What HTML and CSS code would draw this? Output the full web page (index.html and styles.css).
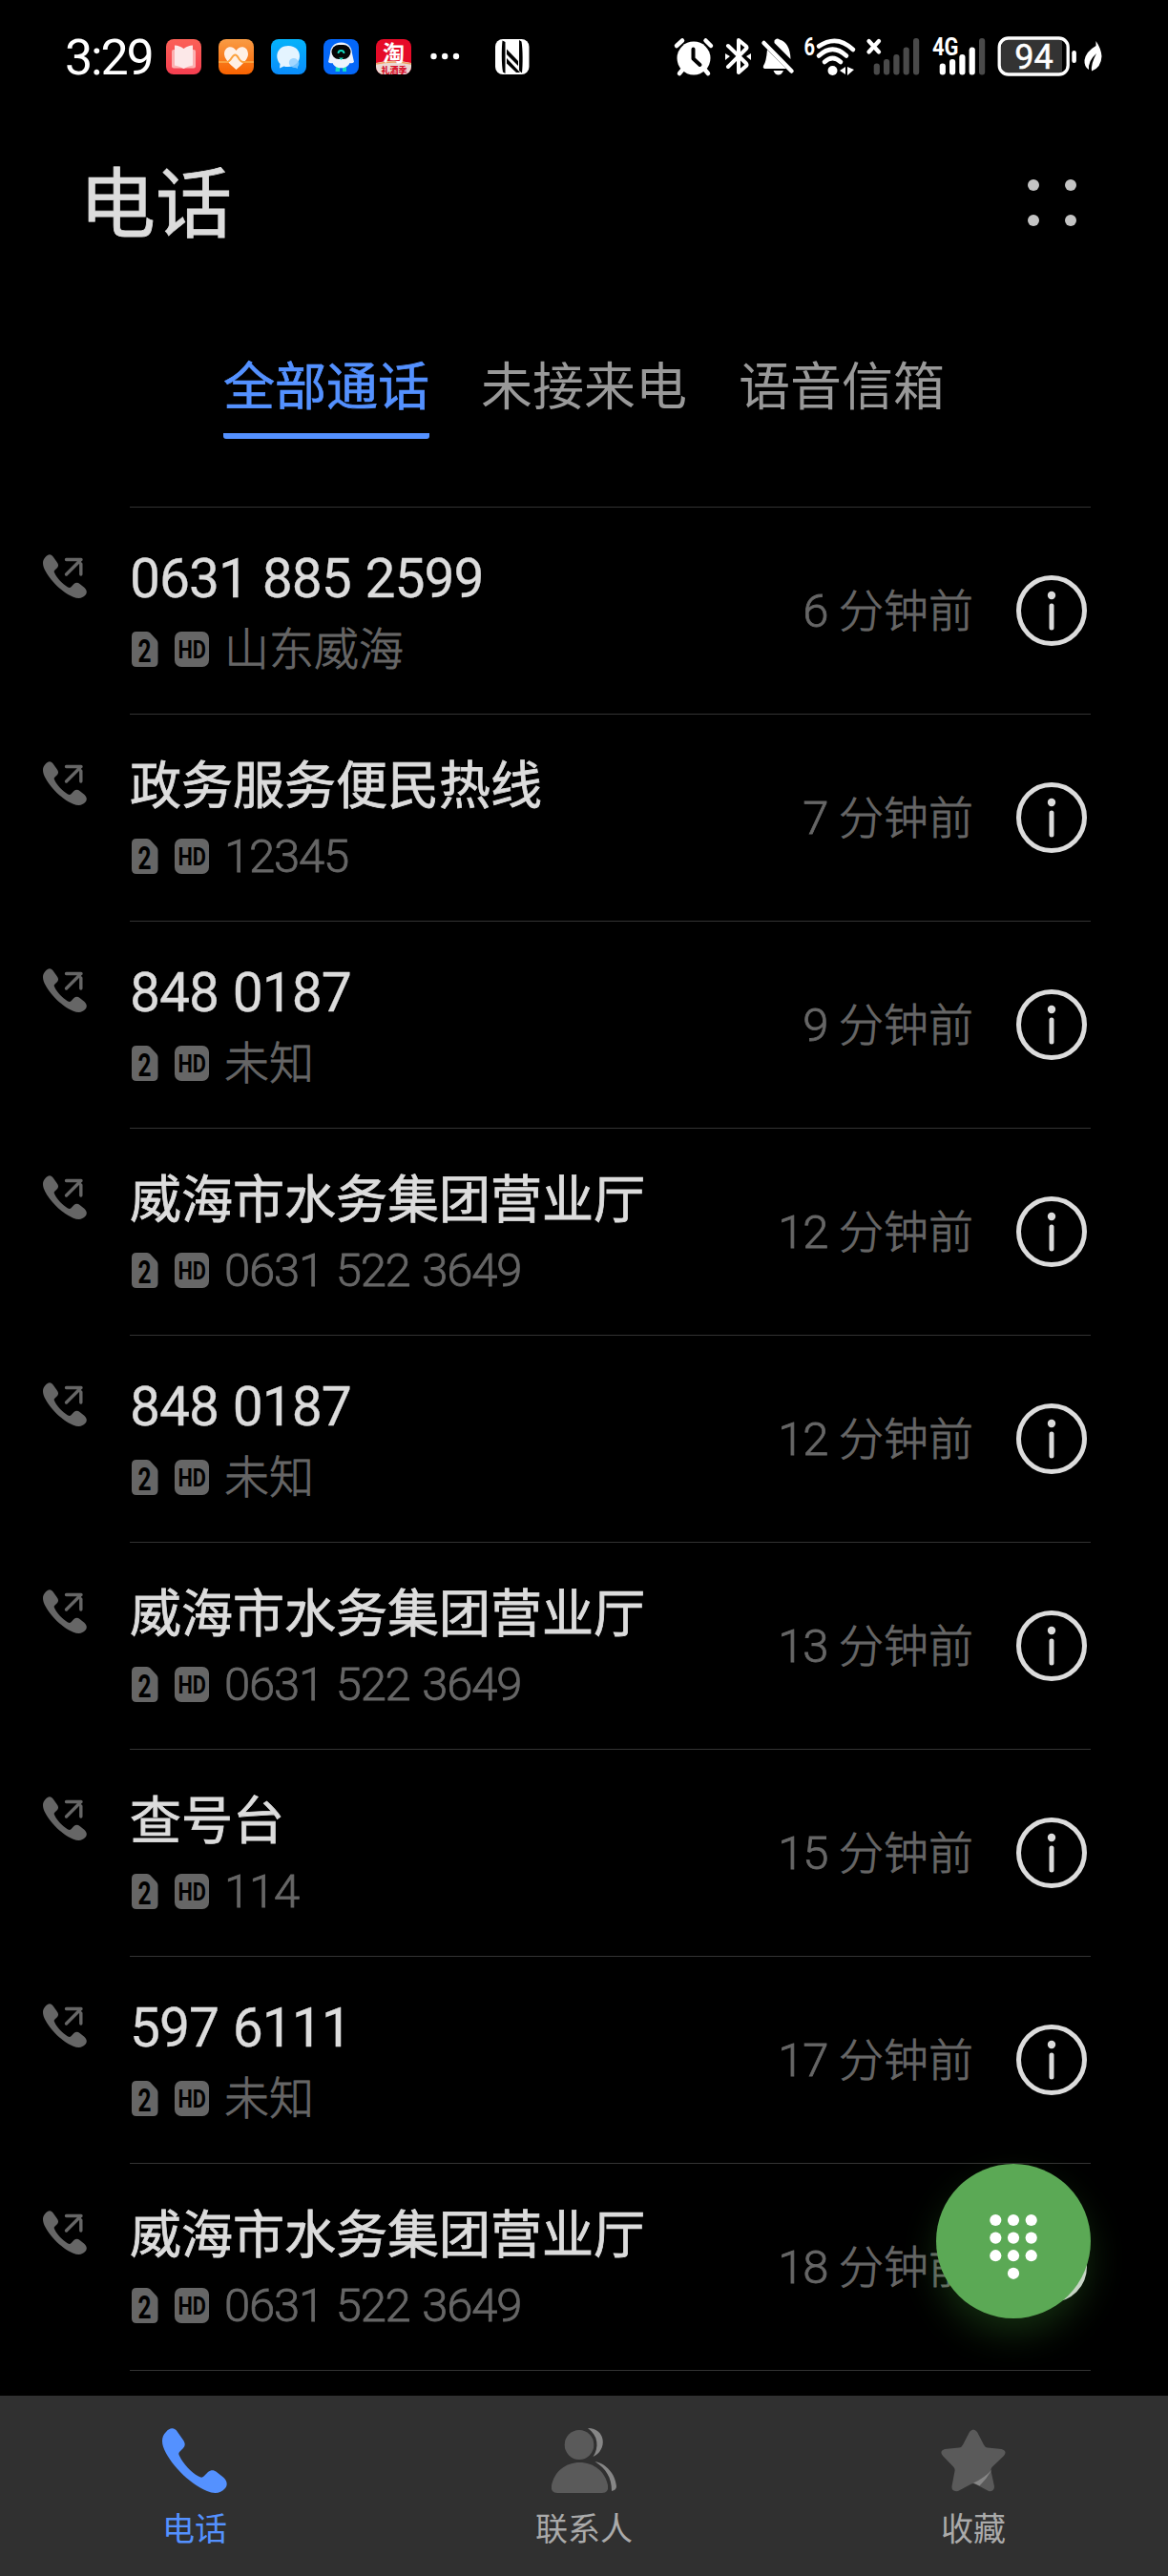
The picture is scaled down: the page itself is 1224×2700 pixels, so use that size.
FILE: index.html
```html
<!DOCTYPE html>
<html lang="zh-CN">
<head>
    <meta charset="UTF-8">
    <meta name="viewport" content="width=device-width, initial-scale=1.0">
    <title>电话</title>
    <link rel="stylesheet" href="styles.css">
</head>
<body>
    <!-- shared icons -->
    <svg class="sprite" width="0" height="0">
        <symbol id="phone" viewBox="0 0 68 68">
            <path d="M4 4C8 -1 13 -1 16 4L22 12.500C24.500 16 24 19 22 21L18.500 24.500C17 26 17 27 18 29C22 37.500 30 46 38 50.500C40.500 52 42 52 43.500 50.500L48 46C51 43.500 54 43.500 57 46L64 51.500C68.500 55.500 68.500 60 66 63C61 69 54 69 47 66C27 57.500 7 36 1 19.500C-1 13 0 8 4 4Z"/>
        </symbol>
        <symbol id="outgoing" viewBox="0 0 46 47">
            <use href="#phone" width="46" height="46"/>
            <path d="M24.500 5.500H40M39.800 10V21M24.500 21L39 6.500" fill="none" stroke="#666" stroke-width="3.400" stroke-linecap="round"/>
        </symbol>
        <symbol id="info" viewBox="0 0 74 74">
            <circle cx="37" cy="37" r="34.500" fill="none" stroke="#dcdcdc" stroke-width="5"/>
            <circle cx="37" cy="21" r="4.200" fill="#dcdcdc"/>
            <path d="M37 32V55" stroke="#dcdcdc" stroke-width="5" stroke-linecap="round"/>
        </symbol>
        <symbol id="sim" viewBox="0 0 28 37">
            <path d="M5 0H16Q18 0 19.500 1.500L26 8.500Q27.500 10 27.500 12V32Q27.500 37 22.500 37H5Q0 37 0 32V5Q0 0 5 0Z" fill="#666"/>
            <text x="13.500" y="31.500" text-anchor="middle" class="sim-text" textLength="14" lengthAdjust="spacingAndGlyphs">2</text>
        </symbol>
        <symbol id="hd" viewBox="0 0 36 37">
            <rect width="36" height="37" rx="7" fill="#666"/>
            <text x="18.200" y="27.500" text-anchor="middle" class="hd-text" textLength="29.500" lengthAdjust="spacingAndGlyphs">HD</text>
        </symbol>
    </svg>

    <div class="status-bar">
        <div class="status-left">
            <span class="clock">3:29</span>
            <svg class="app" viewBox="0 0 37 37">
                <defs><linearGradient id="g1" x2="0" y2="1"><stop stop-color="#fb6157"/><stop offset="1" stop-color="#f53e50"/></linearGradient></defs>
                <rect width="37" height="37" rx="8" fill="url(#g1)"/>
                <rect x="6" y="11" width="25" height="19.500" rx="2" fill="#fbb0b0"/>
                <path d="M9 6.500Q14 6.500 18.500 10Q23 6.500 28 6.500V27.500Q23 28 18.500 31Q14 28 9 27.500Z" fill="#fce8e8"/>
            </svg>
            <svg class="app" viewBox="0 0 37 37">
                <defs><linearGradient id="g2" x2="0" y2="1"><stop stop-color="#f99c45"/><stop offset="1" stop-color="#f86200"/></linearGradient></defs>
                <rect width="37" height="37" rx="8" fill="url(#g2)"/>
                <path d="M18.500 32Q6 22 6 16C6 7 15 6 18.500 12C22 6 31 7 31 16Q31 22 18.500 32Z" fill="#fff0e6"/>
                <path d="M0 24H9C13 24 14 16.500 17.500 16.500S21 24 26 24H37" fill="none" stroke="#fba23f" stroke-width="2"/>
            </svg>
            <svg class="app" viewBox="0 0 37 37">
                <defs><linearGradient id="g3" x2="0" y2="1"><stop stop-color="#04b3fa"/><stop offset="1" stop-color="#0a8cfb"/></linearGradient></defs>
                <rect width="37" height="37" rx="8" fill="url(#g3)"/>
                <path d="M18 7C26 7 30 12 30 18S25 29 18 29Q15 29 13.500 28.500L9 30.500L9.500 26C3 18 7 7 18 7Z" fill="#e4f4ff"/>
                <path d="M24 20A5.500 5.500 0 0 1 28 29L28 31L25.500 30C17 30 17 20 24 20Z" fill="#8fd0ff" opacity=".8"/>
            </svg>
            <svg class="app" viewBox="0 0 37 37">
                <rect width="37" height="37" rx="8" fill="#0467f8"/>
                <path d="M13 28H17V34H12.500M20 28H24V34H20" fill="#14dcc0"/>
                <path d="M18.500 3.500C26 3.500 30 9 30 15L32 24Q30 26 27.500 25C25 32 12 32 9.500 25Q7 26 5 24L7 15C7 9 11 3.500 18.500 3.500Z" fill="#eef3fc"/>
                <rect x="8.500" y="6" width="20" height="15" rx="7.500" fill="#050505"/>
                <path d="M15.500 15A3 3 0 0 1 21.500 15" fill="none" stroke="#14dcc0" stroke-width="1.800"/>
                <path d="M16 19.500H21L18.500 22Z" fill="#14dcc0"/>
            </svg>
            <svg class="app" viewBox="0 0 37 37">
                <defs><clipPath id="round"><rect width="37" height="37" rx="8"/></clipPath></defs>
                <g clip-path="url(#round)">
                    <rect width="37" height="37" fill="#e60b28"/>
                    <path d="M0 25Q18 20 37 25V37H0Z" fill="#ead9d4"/>
                    <path d="M0 26Q18 22 37 26" fill="none" stroke="#f0a060" stroke-width="1.500"/>
                    <text x="18.500" y="22.500" text-anchor="middle" class="tao">淘</text>
                    <text x="19" y="35.500" text-anchor="middle" class="tao-sub">礼酒季</text>
                </g>
            </svg>
            <svg class="more-dots" width="30" height="8" viewBox="0 0 30 8">
                <g fill="#fff"><circle cx="3.500" cy="4" r="3.200"/><circle cx="15.200" cy="4" r="3.200"/><circle cx="27" cy="4" r="3.200"/></g>
            </svg>
            <svg class="nfc" width="36" height="37" viewBox="0 0 36 37">
                <rect width="35.500" height="37" rx="8" fill="#fff"/>
                <path d="M7.500 1.500L10.500 3V36L8 34.500C6.500 26 6.500 10 7.500 1.500ZM12 10.500L24 23V28L12 16ZM12 20L26 35H22L12 25.500ZM25 1L27.500 2.500C29 11 29 27 28 35.500L25 33Z" fill="#000"/>
            </svg>
        </div>
        <div class="status-right">
            <!-- alarm -->
            <svg width="42" height="41" viewBox="0 0 42 41">
                <path d="M2 9L8 3.500M32.500 3.500L38 9M10 32L5 38M30 32L35 38" stroke="#fff" stroke-width="4.500" stroke-linecap="round"/>
                <circle cx="20" cy="22" r="17.500" fill="#fff"/>
                <path d="M19.500 12.500V22.500L26.500 29" fill="none" stroke="#000" stroke-width="4" stroke-linecap="round" stroke-linejoin="round"/>
            </svg>
            <!-- bluetooth -->
            <svg width="27" height="40" viewBox="0 0 27 40">
                <path d="M3 9L22 27.500Q23 29 22 30L14 37V3L22 9.500Q23 11 22 12L3 31" fill="none" stroke="#fff" stroke-width="4" stroke-linecap="round" stroke-linejoin="round"/>
                <path d="M0 17L5 20L0 24ZM27 17L22 20L27 24Z" fill="#fff"/>
            </svg>
            <!-- muted bell -->
            <svg width="34" height="40" viewBox="0 0 34 40">
                <path d="M13.500 3.500Q16 0 19 2.500Q30 6 30.500 23L13.500 6Z" fill="#fff"/>
                <path d="M6 13L26 33H3Q1 32 2 30Q5 26 6 13ZM12.500 35H23Q21 39.500 17.700 39.500T12.500 35Z" fill="#fff"/>
                <path d="M2.500 6L31.500 35.500" stroke="#fff" stroke-width="4.500" stroke-linecap="round"/>
            </svg>
            <!-- wifi -->
            <svg width="54" height="41" viewBox="0 0 54 41">
                <text x="-.5" y="18.500" class="net-text" textLength="11.500" lengthAdjust="spacingAndGlyphs">6</text>
                <g fill="none" stroke="#fff" stroke-width="4.600" stroke-linecap="round">
                    <path d="M15 9.500Q34 -3.500 51 13"/>
                    <path d="M15 19.500Q29.500 6 44 19.500"/>
                    <path d="M21 26Q29.500 18 38 26"/>
                </g>
                <circle cx="29.500" cy="35" r="5" fill="#fff"/>
                <path d="M43 31V39L37 35ZM45 31V40L52 34Z" fill="#fff"/>
            </svg>
            <!-- sim 1, no service -->
            <svg width="58" height="41" viewBox="0 0 58 41">
                <path d="M2.500 4L13 15.500M13 4L2.500 15.500" stroke="#fff" stroke-width="4.300" stroke-linecap="round"/>
                <g fill="#4a4a4a">
                    <rect x="7.700" y="27.500" width="6.200" height="12" rx="3"/>
                    <rect x="18" y="23" width="6.200" height="16.500" rx="3"/>
                    <rect x="28.300" y="18" width="6.200" height="21.500" rx="3"/>
                    <rect x="38.600" y="10.500" width="6.200" height="29" rx="3"/>
                    <rect x="49" y="1" width="6.200" height="38.500" rx="3"/>
                </g>
            </svg>
            <!-- sim 2 -->
            <svg width="57" height="41" viewBox="0 0 57 41">
                <text x="0" y="19" class="net-text" textLength="27.500" lengthAdjust="spacingAndGlyphs">4G</text>
                <g fill="#fff">
                    <rect x="7.700" y="27.500" width="6.200" height="12" rx="3"/>
                    <rect x="18" y="23" width="6.200" height="16.500" rx="3"/>
                    <rect x="28.300" y="18" width="6.200" height="21.500" rx="3"/>
                    <rect x="38.600" y="10.500" width="6.200" height="29" rx="3"/>
                    <rect x="49" y="1" width="6.200" height="38.500" rx="3" fill="#4a4a4a"/>
                </g>
            </svg>
            <!-- battery -->
            <svg width="83" height="42" viewBox="0 0 83 42">
                <path d="M12 2.500H68V39.500H12Q4 39.500 4 31V11Q4 2.500 12 2.500Z" fill="#333"/>
                <rect x="2.200" y="2" width="72" height="38" rx="9.500" fill="none" stroke="#fff" stroke-width="3.300"/>
                <rect x="78.300" y="15" width="4.600" height="13" rx="2.300" fill="#fff"/>
                <text x="38.500" y="34" text-anchor="middle" class="battery-text">94</text>
            </svg>
            <svg class="leaf" width="19" height="32" viewBox="0 0 19 32">
                <path d="M12.500 0Q18 8 18.500 16Q18 28 8 31.500Q7 24 13 13Q4 21 5 30Q0 27 .5 20Q2 11 12.500 5Z" fill="#fff"/>
            </svg>
        </div>
    </div>

    <header class="header">
        <h1>电话</h1>
        <div class="menu"><i></i><i></i><i></i><i></i></div>
    </header>

    <div class="tabs">
        <span class="tab active">全部通话</span>
        <span class="tab">未接来电</span>
        <span class="tab">语音信箱</span>
    </div>

    <ul class="calls">
        <li class="call">
            <svg class="call-icon"><use href="#outgoing"/></svg>
            <div class="call-body">
                <div class="who">
                    <div class="name num">0631 885 2599</div>
                    <div class="detail"><svg class="sim"><use href="#sim"/></svg><svg class="hd"><use href="#hd"/></svg><span>山东威海</span></div>
                </div>
                <div class="time"><span class="num">6</span> 分钟前</div>
                <svg class="info"><use href="#info"/></svg>
            </div>
        </li>
        <li class="call">
            <svg class="call-icon"><use href="#outgoing"/></svg>
            <div class="call-body">
                <div class="who">
                    <div class="name">政务服务便民热线</div>
                    <div class="detail"><svg class="sim"><use href="#sim"/></svg><svg class="hd"><use href="#hd"/></svg><span class="num">12345</span></div>
                </div>
                <div class="time"><span class="num">7</span> 分钟前</div>
                <svg class="info"><use href="#info"/></svg>
            </div>
        </li>
        <li class="call">
            <svg class="call-icon"><use href="#outgoing"/></svg>
            <div class="call-body">
                <div class="who">
                    <div class="name num">848 0187</div>
                    <div class="detail"><svg class="sim"><use href="#sim"/></svg><svg class="hd"><use href="#hd"/></svg><span>未知</span></div>
                </div>
                <div class="time"><span class="num">9</span> 分钟前</div>
                <svg class="info"><use href="#info"/></svg>
            </div>
        </li>
        <li class="call">
            <svg class="call-icon"><use href="#outgoing"/></svg>
            <div class="call-body">
                <div class="who">
                    <div class="name">威海市水务集团营业厅</div>
                    <div class="detail"><svg class="sim"><use href="#sim"/></svg><svg class="hd"><use href="#hd"/></svg><span class="num">0631 522 3649</span></div>
                </div>
                <div class="time"><span class="num">12</span> 分钟前</div>
                <svg class="info"><use href="#info"/></svg>
            </div>
        </li>
        <li class="call">
            <svg class="call-icon"><use href="#outgoing"/></svg>
            <div class="call-body">
                <div class="who">
                    <div class="name num">848 0187</div>
                    <div class="detail"><svg class="sim"><use href="#sim"/></svg><svg class="hd"><use href="#hd"/></svg><span>未知</span></div>
                </div>
                <div class="time"><span class="num">12</span> 分钟前</div>
                <svg class="info"><use href="#info"/></svg>
            </div>
        </li>
        <li class="call">
            <svg class="call-icon"><use href="#outgoing"/></svg>
            <div class="call-body">
                <div class="who">
                    <div class="name">威海市水务集团营业厅</div>
                    <div class="detail"><svg class="sim"><use href="#sim"/></svg><svg class="hd"><use href="#hd"/></svg><span class="num">0631 522 3649</span></div>
                </div>
                <div class="time"><span class="num">13</span> 分钟前</div>
                <svg class="info"><use href="#info"/></svg>
            </div>
        </li>
        <li class="call">
            <svg class="call-icon"><use href="#outgoing"/></svg>
            <div class="call-body">
                <div class="who">
                    <div class="name">查号台</div>
                    <div class="detail"><svg class="sim"><use href="#sim"/></svg><svg class="hd"><use href="#hd"/></svg><span class="num">114</span></div>
                </div>
                <div class="time"><span class="num">15</span> 分钟前</div>
                <svg class="info"><use href="#info"/></svg>
            </div>
        </li>
        <li class="call">
            <svg class="call-icon"><use href="#outgoing"/></svg>
            <div class="call-body">
                <div class="who">
                    <div class="name num">597 6111</div>
                    <div class="detail"><svg class="sim"><use href="#sim"/></svg><svg class="hd"><use href="#hd"/></svg><span>未知</span></div>
                </div>
                <div class="time"><span class="num">17</span> 分钟前</div>
                <svg class="info"><use href="#info"/></svg>
            </div>
        </li>
        <li class="call">
            <svg class="call-icon"><use href="#outgoing"/></svg>
            <div class="call-body">
                <div class="who">
                    <div class="name">威海市水务集团营业厅</div>
                    <div class="detail"><svg class="sim"><use href="#sim"/></svg><svg class="hd"><use href="#hd"/></svg><span class="num">0631 522 3649</span></div>
                </div>
                <div class="time"><span class="num">18</span> 分钟前</div>
                <svg class="info"><use href="#info"/></svg>
            </div>
        </li>
    </ul>

    <button class="dial">
        <svg width="50" height="70" viewBox="0 0 50 70" fill="#fff">
            <circle cx="6.300" cy="7" r="6.100"/><circle cx="25" cy="7" r="6.100"/><circle cx="43.700" cy="7" r="6.100"/>
            <circle cx="6.300" cy="25.600" r="6.100"/><circle cx="25" cy="25.600" r="6.100"/><circle cx="43.700" cy="25.600" r="6.100"/>
            <circle cx="6.300" cy="44.200" r="6.100"/><circle cx="25" cy="44.200" r="6.100"/><circle cx="43.700" cy="44.200" r="6.100"/>
            <circle cx="25" cy="62.800" r="6.100"/>
        </svg>
    </button>

    <nav class="nav">
        <div class="nav-item active">
            <svg width="68" height="68"><use href="#phone"/></svg>
            <span>电话</span>
        </div>
        <div class="nav-item">
            <svg width="68" height="68" viewBox="0 0 68 68">
                <ellipse cx="29" cy="17.500" rx="15.300" ry="15.500" fill="#5a5a5a"/>
                <path d="M0 60C3 45 15 36 29.500 36S56 45 59 60Q60 68 53 68H6Q-1 68 0 60Z" fill="#5a5a5a"/>
                <path d="M38 0C57 0 59 23 43.500 30C50 20 49 8 38 0ZM45.500 35C57 37 67 48 68 61Q68 65 63 66C63 51 57 43 45.500 35Z" fill="#868686"/>
            </svg>
            <span>联系人</span>
        </div>
        <div class="nav-item">
            <svg width="68" height="68" viewBox="0 0 68 68">
                <path d="M30 4Q34 -1 38 4L45 17.500Q46 20 49 20.500L63.500 22Q70 24 66 29L53.500 41Q52 43 52.500 45L56 61Q56 67 50 66L36 58.500Q34 57.500 32 58.500L18 66Q11 67 11.500 61L14.500 45Q15 43 13.500 41L2 29Q-2 24 4 22L19 20.500Q22 20 23 17.500Z" fill="#5a5a5a"/>
                <path d="M53.500 43.500Q46 52 34 57.500L40.500 60.500Q48 53 53.500 43.500Z" fill="#868686"/>
            </svg>
            <span>收藏</span>
        </div>
    </nav>
</body>
</html>
```
FILE: styles.css
```css
* {
    box-sizing: border-box;
}
body {
    margin: 0;
    width: 1224px;
    height: 2700px;
    background-color: #000;
    color: #dcdcdc;
    font-family: Lato, "Noto Sans CJK SC", sans-serif;
    display: flex;
    flex-direction: column;
    overflow: hidden;
    position: relative;
}
svg {
    display: block;
    flex: none;
    overflow: visible;
}
.sprite {
    display: none;
}

/* status bar */
.status-bar {
    height: 118px;
    padding: 0 69px 0 69px;
    display: flex;
    justify-content: space-between;
    align-items: center;
    color: #fff;
}
.status-left, .status-right {
    display: flex;
    align-items: center;
}
.status-left {
    gap: 18px;
}
.status-right {
    gap: 11px;
}
.clock {
    width: 87px;
    font-family: Roboto, sans-serif;
    font-size: 52px;
    line-height: 60px;
    letter-spacing: -2.2px;
    margin: 3px 1px 0 -1px;
    white-space: nowrap;
}
.app {
    width: 37px;
    height: 37px;
}
.more-dots {
    margin-left: 2px;
}
.nfc {
    margin-left: 20px;
}
.leaf {
    margin-left: -3px;
}
.tao {
    font-size: 23px;
    font-weight: 700;
    fill: #fff;
}
.tao-sub {
    font-size: 9px;
    font-weight: 900;
    fill: #d8102a;
}
.net-text {
    font-family: Roboto, sans-serif;
    font-size: 25px;
    font-weight: 700;
    fill: #fff;
}
.battery-text {
    font-family: Roboto, sans-serif;
    font-size: 36px;
    fill: #fff;
    stroke: #fff;
    stroke-width: .5px;
}

/* title */
.header {
    height: 190px;
    padding: 0 96px 0 83px;
    display: flex;
    justify-content: space-between;
    align-items: center;
    padding-bottom: 2px;
    margin-bottom: 52px;
}
.header h1 {
    margin: -2px 0 0;
    font-size: 80px;
    font-weight: 400;
    line-height: 96px;
    -webkit-text-stroke: .8px #dcdcdc;
}
.menu {
    display: grid;
    grid-template-columns: 12px 12px;
    gap: 25px 27px;
}
.menu i {
    width: 12px;
    height: 12px;
    border-radius: 50%;
    background-color: #c4c4c4;
}

/* tabs */
.tabs {
    height: 171px;
    display: flex;
    justify-content: center;
    align-items: flex-start;
    gap: 54px;
}
.tab {
    height: 100px;
    font-size: 54px;
    line-height: 90px;
    color: #999;
}
.tab.active {
    color: #5491ff;
    -webkit-text-stroke: .7px #5491ff;
    border-bottom: 6px solid #5491ff;
    border-radius: 3px;
}

/* call list */
.calls {
    margin: 0;
    padding: 0 81px 0 45px;
    list-style: none;
}
.call {
    display: flex;
    height: 217px;
}
.call-icon {
    width: 46px;
    height: 47px;
    margin: 50px 45px 0 0;
    fill: #666;
}
.call-body {
    flex: 1;
    display: flex;
    align-items: center;
    border-top: 1px solid #333;
}
.call:last-child {
    height: 218px;
}
.call:last-child .call-body {
    border-bottom: 1px solid #333;
}
.who {
    flex: 1;
    height: 216px;
    padding-top: 38px;
}
.name {
    height: 70px;
    font-size: 54px;
    line-height: 72px;
    white-space: nowrap;
    -webkit-text-stroke: .8px #dcdcdc;
}
.num {
    font-family: Roboto, sans-serif;
}
.name.num {
    font-size: 57px;
    line-height: 74px;
    letter-spacing: -1px;
    word-spacing: 1.5px;
    -webkit-text-stroke: .3px #dcdcdc;
}
.detail {
    display: flex;
    align-items: center;
    margin-top: 14px;
    padding-left: 2px;
    height: 50px;
    font-size: 47px;
    font-weight: 300;
    line-height: 50px;
    color: #666;
    white-space: nowrap;
    -webkit-text-stroke: .8px #666;
}
.detail .num, .time .num {
    font-size: 49px;
    letter-spacing: -1.2px;
    word-spacing: 2px;
}
.detail .num {
    padding-top: 3px;
}
.sim {
    width: 28px;
    height: 37px;
    margin: 2px 17px 0 0;
}
.hd {
    width: 36px;
    height: 37px;
    margin: 2px 16px 0 0;
}
.sim-text {
    font-family: Roboto, sans-serif;
    font-size: 34px;
    font-weight: 700;
    fill: #000;
    -webkit-text-stroke: 0;
}
.hd-text {
    font-family: Roboto, sans-serif;
    font-size: 25px;
    font-weight: 700;
    fill: #000;
    -webkit-text-stroke: 0;
}
.time {
    margin-right: 45px;
    font-size: 47px;
    font-weight: 300;
    line-height: 56px;
    word-spacing: -1px;
    color: #666;
    -webkit-text-stroke: .8px #666;
}
.info {
    width: 74px;
    height: 74px;
    margin-right: 4px;
}

/* floating dial button */
.dial {
    position: absolute;
    right: 81px;
    top: 2268px;
    width: 162px;
    height: 162px;
    padding: 0;
    border: none;
    border-radius: 50%;
    background-color: #5ba955;
    box-shadow: 0 18px 40px -4px rgba(76, 175, 62, .28);
    display: flex;
    justify-content: center;
    align-items: center;
    cursor: pointer;
}
.dial svg {
    margin-top: 11px;
}

/* bottom nav */
.nav {
    height: 189px;
    margin-top: auto;
    flex: none;
    background-color: #303030;
    display: flex;
}
.nav-item {
    flex: 1;
    display: flex;
    flex-direction: column;
    align-items: center;
    padding-top: 34px;
    font-size: 34px;
    line-height: 40px;
    color: #aaa;
}
.nav-item span {
    margin-top: 17px;
}
.nav-item.active {
    color: #5491ff;
    fill: #5491ff;
}
```
